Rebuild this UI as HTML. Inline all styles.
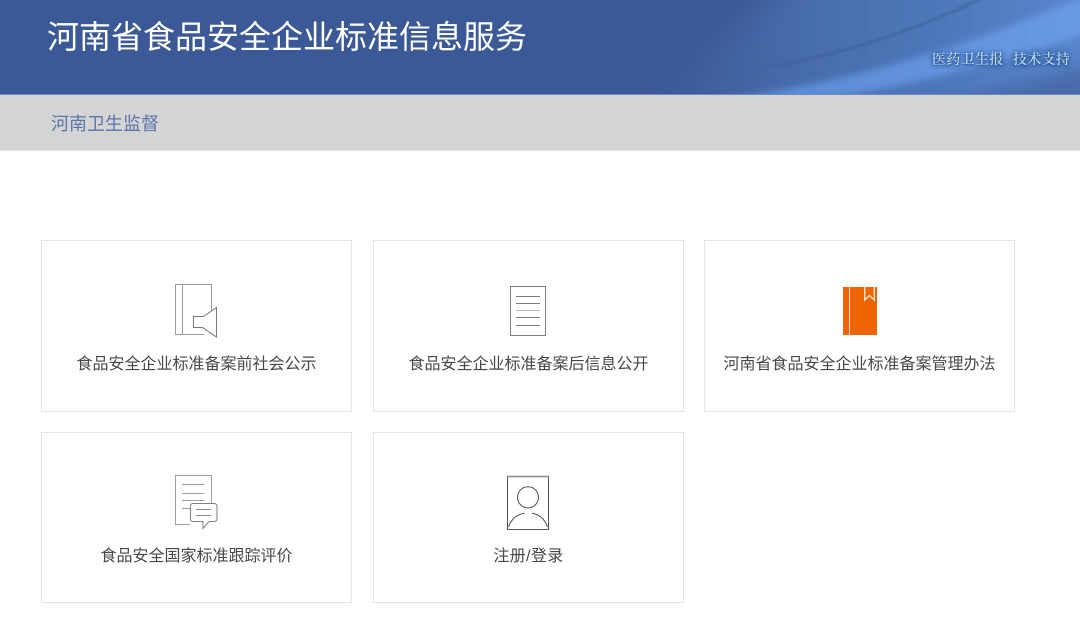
<!DOCTYPE html>
<html lang="zh-CN">
<head>
<meta charset="utf-8">
<title>河南省食品安全企业标准信息服务</title>
<style>
html,body{margin:0;padding:0;background:#fff}
body{width:1080px;height:633px;position:relative;overflow:hidden;font-family:"Liberation Sans","Noto Sans CJK SC",sans-serif}
.hd{position:absolute;left:0;top:0;width:1080px;height:95px;background:#3c5997;overflow:hidden}
.hd svg{position:absolute;left:0;top:0}
.title{position:absolute;left:47px;top:13px;font-size:32px;line-height:48px;color:#fff;white-space:nowrap}
.tech{position:absolute;top:51px;font-size:14px;line-height:20px;color:#c2e0f2;white-space:nowrap;letter-spacing:.3px;font-family:"Liberation Serif","Noto Serif CJK SC",serif;font-weight:500;text-shadow:0 0 4px #2a5598,0 1px 3px #2a5090,0 0 6px #2f5fa6,0 1px 1px #3a66a8}
.nav{position:absolute;left:0;top:95px;width:1080px;height:55px;background:#d4d4d4;border-bottom:1px solid #e6e6e6}
.nav span{position:absolute;left:51px;top:16px;font-size:18px;line-height:26px;color:#5a76a9;white-space:nowrap}
.card{position:absolute;width:311px;height:172px;box-sizing:border-box;border:1px solid #e4e4e4;background:#fff}
.card svg{position:absolute;left:0;top:0}
.card p{position:absolute;left:0;right:0;margin:0;top:111px;text-align:center;font-size:16px;line-height:24px;color:#484848;white-space:nowrap}
</style>
</head>
<body>
<div class="hd">
<svg width="1080" height="95" viewBox="0 0 1080 95">
<defs>
<linearGradient id="g1" gradientUnits="userSpaceOnUse" x1="660" y1="0" x2="1080" y2="0">
<stop offset="0" stop-color="#466aa9" stop-opacity="0"/>
<stop offset=".3" stop-color="#466aa9"/>
<stop offset=".7" stop-color="#4f79bb"/>
<stop offset="1" stop-color="#5a86cc"/>
</linearGradient>
<linearGradient id="g2" gradientUnits="userSpaceOnUse" x1="690" y1="0" x2="1080" y2="0">
<stop offset="0" stop-color="#5f92de" stop-opacity="0"/>
<stop offset=".22" stop-color="#5d8ed8" stop-opacity=".9"/>
<stop offset="1" stop-color="#689ae4"/>
</linearGradient>
<linearGradient id="g3" gradientUnits="userSpaceOnUse" x1="680" y1="0" x2="980" y2="0">
<stop offset="0" stop-color="#3f5f9e" stop-opacity="0"/>
<stop offset=".45" stop-color="#3f629f" stop-opacity=".9"/>
<stop offset="1" stop-color="#3f689f" stop-opacity=".9"/>
</linearGradient>
<filter id="b12" x="-30%" y="-60%" width="160%" height="220%"><feGaussianBlur stdDeviation="14"/></filter>
<filter id="b4" x="-20%" y="-60%" width="140%" height="220%"><feGaussianBlur stdDeviation="3.500"/></filter>
<filter id="b7" x="-30%" y="-80%" width="160%" height="260%"><feGaussianBlur stdDeviation="8"/></filter>
<filter id="b1" x="-10%" y="-40%" width="120%" height="180%"><feGaussianBlur stdDeviation="1"/></filter>
</defs>
<path d="M640 120 L800 -30 H1120 V120Z" fill="url(#g1)" filter="url(#b12)"/>
<path d="M700 102 C850 84 970 45 1090 -6 V32 C980 68 890 92 800 102Z" fill="url(#g2)" filter="url(#b4)"/>
<path d="M910 112 C980 94 1040 80 1100 62 V112Z" fill="#42629f" opacity=".75" filter="url(#b7)"/>
<path d="M690 78 C810 66 900 38 982 -2" fill="none" stroke="url(#g3)" stroke-width="2.500" filter="url(#b1)"/>
<rect x="0" y="94" width="1080" height="1" fill="#6f89bb"/>
</svg>
<div class="title">河南省食品安全企业标准信息服务</div>
<div class="tech" style="left:932px">医药卫生报</div>
<div class="tech" style="left:1013px">技术支持</div>
</div>
<div class="nav"><span>河南卫生监督</span></div>

<div class="card" style="left:41px;top:240px">
<svg width="309" height="170" fill="none">
<g transform="translate(-42 -241)" stroke="#9a9a9a" stroke-width="1">
<path d="M204 334.500H175.500V284.500H211.500V311"/>
<path d="M182.500 284.500V334.500"/>
<path stroke="#777" d="M216.500 307.500L203.500 316.500H193.500V327.500H202.500L216.500 337V307.500Z" fill="#fff"/>
</g>
</svg>
<p style="top:112px">食品安全企业标准备案前社会公示</p>
</div>

<div class="card" style="left:373px;top:240px">
<svg width="309" height="170" fill="none">
<g transform="translate(-374 -241)" stroke="#7d7d7d" stroke-width="1">
<rect x="510.500" y="286.500" width="35" height="49"/>
<path d="M516 296.500H540M516 303.500H540M516 317.500H540M516 325.500H540"/>
<path d="M516 310.500H540" stroke="#bcbcbc"/>
</g>
</svg>
<p style="top:112px">食品安全企业标准备案后信息公开</p>
</div>

<div class="card" style="left:704px;top:240px">
<svg width="309" height="170">
<g transform="translate(-705 -241)">
<rect x="843" y="287" width="34" height="48" fill="#ee6400"/>
<rect x="849" y="287" width="1" height="48" fill="#fbd9c2"/>
<path d="M864.700 287V300L869.500 295.500L874.300 300V287" fill="none" stroke="#fbe2d0" stroke-width="1.400"/>
</g>
</svg>
<p style="top:112px">河南省食品安全企业标准备案管理办法</p>
</div>

<div class="card" style="left:41px;top:432px;height:171px">
<svg width="309" height="169" fill="none">
<g transform="translate(-42 -433)" stroke="#a0a0a0" stroke-width="1">
<path d="M190 524.500H175.500V475.500H211.500V503"/>
<path d="M182 484.500H204.500M182 493.500H204.500M182 500.500H204.500M182 508.500H191"/>
<path stroke="#808080" fill="#fff" d="M193 503.500H214Q217 503.500 217 506.500V518.500Q217 521.500 214 521.500H209L203 528.500V521.500H193Q190.500 521.500 190.500 518.500V506.500Q190.500 503.500 193 503.500Z"/>
<path stroke="#8a8a8a" d="M196 509.500H211M196 515.500H211"/>
</g>
</svg>
<p style="top:112px">食品安全国家标准跟踪评价</p>
</div>

<div class="card" style="left:373px;top:432px;height:171px">
<svg width="309" height="169" fill="none">
<g transform="translate(-374 -433)" stroke="#555" stroke-width="1">
<rect x="507.500" y="476.500" width="41" height="53"/>
<path d="M507 476.500H549" stroke="#8a8a8a" stroke-width="1.500"/>
<circle cx="528" cy="497.300" r="10.500"/>
<path d="M508.500 527C511 520 516 514.500 524.500 513.300"/>
<path d="M532 513.300C540 514.500 545 520 547.500 527"/>
</g>
</svg>
<p style="top:112px;letter-spacing:.35px">注册/登录</p>
</div>
</body>
</html>
